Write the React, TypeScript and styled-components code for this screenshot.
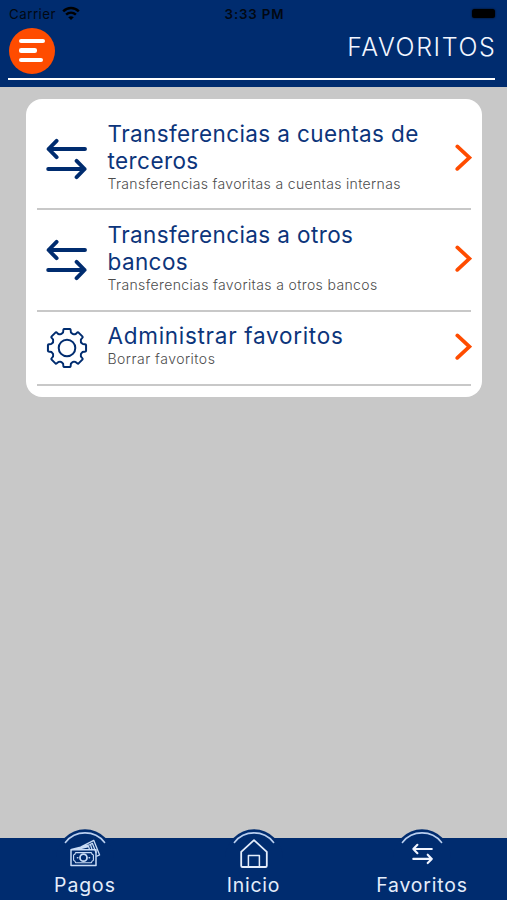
import React from "react";
import styled, { createGlobalStyle } from "styled-components";

const NAVY = "#002c6f";
const ORANGE = "#ff4c00";
const GREY = "#c8c8c8";

const GlobalStyle = createGlobalStyle`
  * { box-sizing: border-box; }
  body { margin: 0; font-family: Inter, "Liberation Sans", sans-serif; }
  svg { display: block; }
`;

const Screen = styled.div`
  width: 507px;
  height: 900px;
  display: flex;
  flex-direction: column;
  background: ${GREY};
  overflow: hidden;
`;

const Header = styled.header`
  height: 86.5px;
  flex: none;
  background: ${NAVY};
`;

const StatusBar = styled.div`
  height: 28px;
  display: grid;
  grid-template-columns: 1fr auto 1fr;
  align-items: center;
  padding: 0 7px 0 9px;
  color: #020812;
  font-size: 13.3px;
  line-height: 28px;
`;

const Carrier = styled.div`
  display: flex;
  align-items: center;
  gap: 6px;
  letter-spacing: 0.5px;
`;

const WifiIcon = styled.svg`
  margin-top: -2px;
`;

const Clock = styled.div`
  font-weight: 600;
  letter-spacing: 0.85px;
`;

const Battery = styled.div`
  justify-self: end;
  margin-right: 5px;
  margin-top: -1px;
  width: 23px;
  height: 9px;
  border-radius: 2.5px;
  background: #000;
  box-shadow: 0 0 2px #000814;
`;

const TitleBar = styled.div`
  height: 52px;
  margin: 0 12px 0 8px;
  border-bottom: 2.5px solid #fff;
  display: flex;
  justify-content: space-between;
`;

const MenuButton = styled.button`
  width: 46px;
  height: 46px;
  margin: -0.5px 0 0 1.3px;
  padding: 0 0 0 9.5px;
  border: 0;
  border-radius: 50%;
  background: ${ORANGE};
  display: flex;
  flex-direction: column;
  justify-content: center;
  gap: 5.4px;
`;

const MenuLine = styled.span<{ $w: number }>`
  width: ${(p) => p.$w}px;
  height: 4.2px;
  border-radius: 2.1px;
  background: #fff;
`;

const PageTitle = styled.h1`
  margin: 3.5px -1.5px 0 0;
  color: #f2f6ff;
  font-size: 25px;
  line-height: 30px;
  font-weight: 300;
  letter-spacing: 1.6px;
`;

const Content = styled.main`
  flex: 1;
  padding: 12.5px 25.5px 0 26px;
`;

const Card = styled.section`
  height: 298px;
  padding: 10px 10.5px;
  border-radius: 16px;
  background: #fff;
`;

const Row = styled.div<{ $h: number }>`
  height: ${(p) => p.$h}px;
  display: grid;
  grid-template-columns: 71px 1fr 17px;
  align-items: center;
  border-bottom: 2.3px solid ${GREY};
`;

const RowIcon = styled.div`
  padding-left: 9px;
`;

const RowText = styled.div`
  align-self: start;
  padding-top: 10.6px;
  white-space: nowrap;
`;

const RowTitle = styled.div<{ $ls: number }>`
  color: #0c357b;
  font-size: 22.5px;
  line-height: 27.3px;
  letter-spacing: ${(p) => p.$ls}px;
`;

const RowSub = styled.div<{ $ls: number }>`
  color: #4c4c4c;
  font-size: 14px;
  line-height: 20.3px;
  font-weight: 300;
  letter-spacing: ${(p) => p.$ls}px;
`;

const Chevron = styled.svg`
  margin-top: -2px;
`;

const Nav = styled.nav`
  height: 62px;
  flex: none;
  display: grid;
  grid-template-columns: 170px 167px 170px;
  background: ${NAVY};
`;

const NavItem = styled.a`
  display: flex;
  flex-direction: column;
  align-items: center;
  margin-top: -10px;
`;

const NavLabel = styled.span<{ $ls: number }>`
  margin-top: -1px;
  color: #e4edfb;
  font-size: 19.4px;
  line-height: 24px;
  letter-spacing: ${(p) => p.$ls}px;
`;

const Arrows = () => (
  <svg width="42" height="44" viewBox="0 0 42 44" fill="none" stroke={NAVY} strokeWidth="3.9" strokeLinecap="round" strokeLinejoin="round">
    <path d="M39 12H2.6M10.6 3.8L2.6 12l8 8.2M2.2 32H38.6M30.6 23.8L38.6 32l-8 8.2" />
  </svg>
);

const gearPath = (() => {
  const at = (angle: number, r: number) => {
    const a = (angle * Math.PI) / 180;
    return `${(21 + r * Math.sin(a)).toFixed(2)} ${(21 - r * Math.cos(a)).toFixed(2)}`;
  };
  let d = `M${at(-9, 19.3)}`;
  for (let i = 0; i < 8; i++) {
    const c = i * 45;
    d += `L${at(c + 9, 19.3)}Q${at(c + 11.5, 19.2)} ${at(c + 12, 17.8)}`;
    d += `Q${at(c + 13, 15.9)} ${at(c + 17, 15.7)}Q${at(c + 22.5, 14.6)} ${at(c + 28, 15.7)}`;
    d += `Q${at(c + 32, 15.9)} ${at(c + 33, 17.8)}Q${at(c + 33.5, 19.2)} ${at(c + 36, 19.3)}`;
  }
  return `${d}Z`;
})();

const Gear = () => (
  <svg width="42" height="42" viewBox="0 0 42 42" fill="none" stroke={NAVY} strokeWidth="2" strokeLinejoin="round">
    <path d={gearPath} />
    <circle cx="21" cy="21" r="8.3" />
  </svg>
);

const ArrowRight = () => (
  <Chevron width="18" height="28" viewBox="0 0 18 28" fill="none" stroke={ORANGE} strokeWidth="3.7" strokeLinecap="round">
    <path d="M3.3 2.4L15.4 13.6L3.3 24.9" />
  </Chevron>
);

const Wifi = () => (
  <WifiIcon width="18" height="15" viewBox="0 0 18 15" fill="none" stroke="#000" strokeWidth="2.5">
    <path d="M1.2 5.3C5.7 .9 12.3.9 16.8 5.3M4.1 8.7C7 6 11 6 13.9 8.7" />
    <path d="M9 14L6.2 11.2Q9 9.1 11.8 11.2Z" fill="#000" stroke="none" />
  </WifiIcon>
);

const NavIcon = ({ children }: { children: React.ReactNode }) => (
  <svg width="60" height="46" viewBox="0 0 60 46" fill="none" strokeLinecap="round" strokeLinejoin="round">
    <path d="M1.3 30A28.7 28.7 0 0 1 58.7 30Z" fill={NAVY} />
    <path d="M10.4 14.4A25 25 0 0 1 49.6 14.4" stroke="#b9cff0" strokeWidth="1.6" />
    {children}
  </svg>
);

const Money = () => (
  <g stroke="#c9dcf6" strokeWidth="1.5">
    <path d="M16 21.7H41V37.6H16Z" />
    <path d="M20.6 24.6H36.4Q36.8 26.6 38.4 27V32.3Q36.8 32.7 36.4 34.7H20.6Q20.2 32.7 18.6 32.3V27Q20.2 26.6 20.6 24.6Z" strokeWidth="1.1" />
    <circle cx="28.5" cy="29.7" r="3.5" strokeWidth="1.8" />
    <path d="M22.5 29.7H22.8M34.2 29.7H34.5" strokeWidth="1.6" />
    <path d="M16.5 21.5L35.5 16.6L37 21.5M26 18.8L38.8 12.4L44.6 27L41.8 28.2M22.5 21.3L33.6 18.5L34.4 21.3M35.5 16.3L37.4 15.4L41 24.6" strokeWidth="1.3" />
  </g>
);

const House = () => (
  <g stroke="#e4edfb" strokeWidth="1.8">
    <path d="M17.2 23.8L30 12.1L42.8 23.8V37.7Q42.8 39 41.5 39H18.5Q17.2 39 17.2 37.7Z" />
    <path d="M24.4 39V27.6H35.4V39" strokeWidth="1.5" />
  </g>
);

const SmallArrows = () => (
  <path d="M39.8 21H21.3M25.4 16.8L21.3 21L25.4 25.2M21.3 30.9H39.8M35.7 26.7L39.8 30.9L35.7 35.1" stroke="#f1f5ff" strokeWidth="2.1" />
);

const rows = [
  { title: ["Transferencias a cuentas de", "terceros"], ls: [0.39, 0.42], sub: "Transferencias favoritas a cuentas internas", subLs: 0.34, icon: <Arrows />, h: 101.3 },
  { title: ["Transferencias a otros", "bancos"], ls: [0.39, 0.4], sub: "Transferencias favoritas a otros bancos", subLs: 0.37, icon: <Arrows />, h: 101.3 },
  { title: ["Administrar favoritos"], ls: [0.71], sub: "Borrar favoritos", subLs: 0.48, icon: <Gear />, h: 74.5 },
];

const tabs = [
  { label: "Pagos", ls: 0.95, icon: <Money /> },
  { label: "Inicio", ls: 0.8, icon: <House /> },
  { label: "Favoritos", ls: 0.85, icon: <SmallArrows /> },
];

export default function App() {
  return (
    <Screen>
      <GlobalStyle />
      <Header>
        <StatusBar>
          <Carrier>Carrier <Wifi /></Carrier>
          <Clock>3:33 PM</Clock>
          <Battery />
        </StatusBar>
        <TitleBar>
          <MenuButton aria-label="Menú">
            <MenuLine $w={26.5} />
            <MenuLine $w={18} />
            <MenuLine $w={24} />
          </MenuButton>
          <PageTitle>FAVORITOS</PageTitle>
        </TitleBar>
      </Header>
      <Content>
        <Card>
          {rows.map((row) => (
            <Row key={row.sub} $h={row.h}>
              <RowIcon>{row.icon}</RowIcon>
              <RowText>
                {row.title.map((line, i) => (
                  <RowTitle key={line} $ls={row.ls[i]}>{line}</RowTitle>
                ))}
                <RowSub $ls={row.subLs}>{row.sub}</RowSub>
              </RowText>
              <ArrowRight />
            </Row>
          ))}
        </Card>
      </Content>
      <Nav>
        {tabs.map((tab) => (
          <NavItem key={tab.label}>
            <NavIcon>{tab.icon}</NavIcon>
            <NavLabel $ls={tab.ls}>{tab.label}</NavLabel>
          </NavItem>
        ))}
      </Nav>
    </Screen>
  );
}
